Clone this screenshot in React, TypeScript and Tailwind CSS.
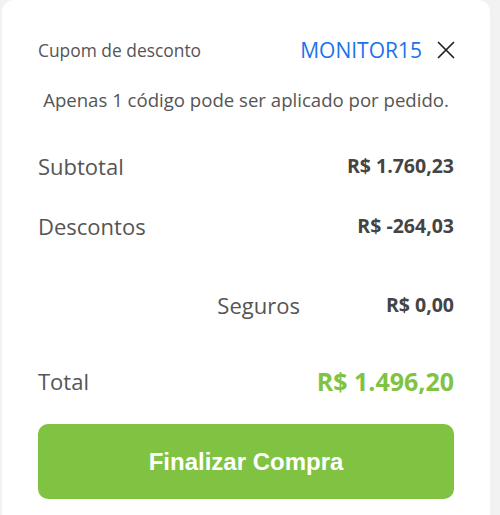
export default function App() {
  return (
    <div className="h-[515px] w-[500px] bg-[#f2f2f2] pl-[2px] pr-[10px]">
      <div className="h-full rounded-t-[12px] bg-white px-[36px] pt-[38px] font-['Open_Sans',sans-serif] leading-[24px] text-[#555]">
        <div className="flex h-[24px] items-center justify-between">
          <span className="text-[17.4px]">Cupom de desconto</span>
          <div className="flex items-center gap-[15px]">
            <span className="text-[21px] text-[#1a73e8]">MONITOR15</span>
            <svg width="18" height="18" viewBox="0 0 18 18" className="mr-[-1px] text-[#222]">
              <path d="M1.5 1.5L16.5 16.5M16.5 1.5L1.5 16.5" stroke="currentColor" strokeWidth={1.7} strokeLinecap="round" />
            </svg>
          </div>
        </div>
        <p className="mt-[26px] text-center text-[18.6px]">Apenas 1 código pode ser aplicado por pedido.</p>

        <div className="mt-[42px] flex items-center justify-between">
          <span className="text-[22px]">Subtotal</span>
          <span className="text-[19.5px] font-bold text-[#444]">R$ 1.760,23</span>
        </div>
        <div className="mt-[36px] flex items-center justify-between">
          <span className="text-[22px]">Descontos</span>
          <span className="text-[19.5px] font-bold text-[#444]">R$ -264,03</span>
        </div>
        <div className="mt-[55px] flex items-center justify-end gap-[86px]">
          <span className="text-[22px]">Seguros</span>
          <span className="text-[19.5px] font-bold text-[#444]">R$ 0,00</span>
        </div>
        <div className="mt-[52px] flex items-center justify-between">
          <span className="text-[22px]">Total</span>
          <span className="text-[25px] font-bold text-[#80c342]">R$ 1.496,20</span>
        </div>

        <button className="mt-[31px] flex h-[75px] w-full items-center justify-center rounded-[10px] bg-[#80c342] font-['Liberation_Sans',sans-serif] text-[24px] font-bold text-white">
          Finalizar Compra
        </button>
      </div>
    </div>
  )
}
